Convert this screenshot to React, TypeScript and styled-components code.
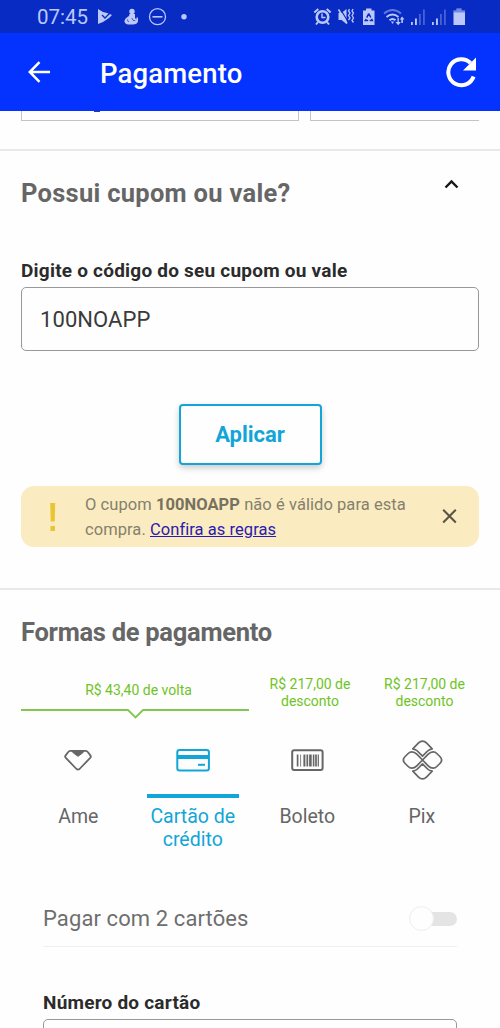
import React from "react";
import styled, { createGlobalStyle } from "styled-components";

const GlobalStyle = createGlobalStyle`
  * { box-sizing: border-box; }
  html, body { margin: 0; padding: 0; background: #fefefe; overflow: hidden; }
  body { font-family: Roboto, "Liberation Sans", sans-serif; }
`;

const BLUE = "#12a5d8";
const GREEN = "#6fc41f";
const GREY = "#666";

const Screen = styled.div`
  width: 500px;
  height: 1028px;
  overflow: hidden;
  display: flex;
  flex-direction: column;
  background: #fefefe;
  white-space: nowrap;
`;

const StatusBar = styled.div`
  flex: none;
  height: 33px;
  display: flex;
  align-items: center;
  padding: 1px 34px 0 37px;
  background: #082bc4;
  color: #bcc8fa;
`;

const Clock = styled.span`
  width: 61px;
  font-size: 20.5px;
`;

const StatusIcons = styled.svg`
  display: block;
  flex: none;
`;

const Spacer = styled.div`
  flex: 1;
`;

const AppBar = styled.header`
  flex: none;
  height: 78px;
  display: flex;
  align-items: center;
  padding: 0 23px 0 28px;
  background: #0433ff;
  color: #fff;
`;

const AppTitle = styled.h1`
  flex: 1;
  margin: 3px 0 0 49px;
  font-size: 27.5px;
  font-weight: 500;
  letter-spacing: 0.15px;
`;

const CutRow = styled.div`
  flex: none;
  height: 38px;
  display: grid;
  grid-template-columns: 278px 1fr;
  gap: 11px;
  align-items: start;
  padding-left: 21px;
  margin-right: 21px;
`;

const CutBox = styled.div<{ $open?: boolean }>`
  height: 10px;
  border: 1px solid #c4c4c4;
  border-top: 0;
  border-right-width: ${(p) => (p.$open ? 0 : 1)}px;
`;

const CutMark = styled.div`
  width: 6px;
  height: 1px;
  margin-left: 72px;
  background: #2a3a9c;
`;

const Divider = styled.div`
  flex: none;
  height: 2px;
  background: #e9e9e9;
`;

const SectionHead = styled.div<{ $h: number; $top: number }>`
  flex: none;
  height: ${(p) => p.$h}px;
  padding: ${(p) => p.$top}px 41px 0 21px;
  display: flex;
  justify-content: space-between;
  align-items: flex-start;
`;

const Heading = styled.h2<{ $ls?: number }>`
  margin: 0;
  font-size: 25.5px;
  line-height: 30px;
  font-weight: 700;
  letter-spacing: ${(p) => p.$ls ?? 0}px;
  color: ${GREY};
`;

const Field = styled.label<{ $inset: number }>`
  flex: none;
  display: flex;
  flex-direction: column;
  margin: 0 ${(p) => p.$inset}px;
  font-size: 19px;
  line-height: 24px;
  font-weight: 700;
  letter-spacing: 0.22px;
  color: #2b2b2b;
`;

const InputBox = styled.div`
  height: 64px;
  margin-top: 4px;
  padding: 1px 18px 0;
  display: flex;
  align-items: center;
  border: 1px solid #999;
  border-radius: 5px;
  font-size: 22px;
  font-weight: 400;
  letter-spacing: 0.08px;
  color: #3a3a3a;
`;

const ApplyButton = styled.button`
  flex: none;
  align-self: center;
  width: 143px;
  height: 61px;
  margin: 53px 0 21px;
  padding: 0;
  border: 2.5px solid ${BLUE};
  border-radius: 4px;
  background: #fefefe;
  box-shadow: 0 3px 6px rgba(0, 0, 0, 0.2);
  font: 700 22px Roboto, sans-serif;
  color: ${BLUE};
`;

const Alert = styled.div`
  flex: none;
  height: 61px;
  margin: 0 21px 41px;
  display: flex;
  align-items: center;
  padding: 0 22px 0 28px;
  border-radius: 13px;
  background: #faecc0;
  color: #85806f;
`;

const AlertText = styled.p`
  flex: 1;
  margin: 1px 0 0 28px;
  font-size: 16.5px;
  line-height: 25px;
  letter-spacing: 0.06px;
`;

const Strong = styled.b`
  color: #77715f;
`;

const RulesLink = styled.a`
  color: #2a1ab0;
  text-decoration: underline;
`;

const Offers = styled.div`
  flex: none;
  height: 65px;
  display: grid;
  grid-template-columns: 228px 115px 114px;
  padding: 0 22px 0 21px;
  font-size: 14px;
  line-height: 17px;
  text-align: center;
  color: ${GREEN};
`;

const Offer = styled.div<{ $top: number }>`
  padding: ${(p) => p.$top}px 0 0 7px;
`;

const Notch = styled.svg`
  display: block;
  margin: 9px 0 0 -7px;
`;

const Methods = styled.div`
  flex: none;
  height: 152px;
  display: grid;
  grid-template-columns: repeat(4, 114.5px);
  padding-left: 21px;
`;

const Method = styled.div<{ $active?: boolean }>`
  display: flex;
  flex-direction: column;
  align-items: center;
  text-align: center;
  font-size: 19.5px;
  line-height: 23px;
  color: ${(p) => (p.$active ? BLUE : GREY)};
`;

const ActiveBar = styled.div<{ $active?: boolean }>`
  width: 92px;
  height: 4px;
  margin: 13px 0 7px;
  background: ${(p) => (p.$active ? BLUE : "transparent")};
`;

const TwoCards = styled.div`
  flex: none;
  height: 56px;
  margin: 0 43px 44px;
  display: flex;
  align-items: center;
  justify-content: space-between;
  border-bottom: 1.5px solid #efefef;
  font-size: 22px;
  letter-spacing: 0.1px;
  color: #6e6e6e;
`;

const Track = styled.div`
  width: 46px;
  height: 14px;
  display: flex;
  align-items: center;
  border-radius: 7px;
  background: #e4e4e4;
`;

const Knob = styled.div`
  width: 25px;
  height: 25px;
  margin-left: -2px;
  border: 1px solid #eee;
  border-radius: 50%;
  background: #fefefe;
`;

const LeftIcons = () => (
  <StatusIcons width="92" height="20" viewBox="98 7 92 20" fill="currentColor">
    <path d="M98 9l5 3 4 1 5 2-3 3-6 4-5 2V9z" />
    <path d="M102 15l3 3 6-6" fill="none" stroke="#082bc4" strokeWidth="1.4" />
    <circle cx="132" cy="11.5" r="2.7" />
    <path d="M129.500 14h5.500v4l1.500 1.500v-2h1.500v4q-1 3-5 3h-5q-4-1-3.500-4 .8-2.500 3-3.500l1.500-1z" />
    <path d="M127.500 19.500q-.5 1.500 1.500 2.300M131.800 18l1.500 2.500h2" fill="none" stroke="#082bc4" strokeWidth=".7" />
    <circle cx="157.500" cy="16.700" r="8" fill="none" stroke="currentColor" strokeWidth="1.300" />
    <path d="M152.500 16h10v1.600h-10z" />
    <circle cx="184" cy="16.700" r="2.700" />
  </StatusIcons>
);

const RightIcons = () => (
  <StatusIcons width="153" height="20" viewBox="313 7 153 20" fill="currentColor">
    <g fill="none" stroke="currentColor">
      <circle cx="322.500" cy="17" r="5.800" strokeWidth="2.600" />
      <path d="M322 13.500v4h3.500" strokeWidth="1.400" />
      <path d="M314.300 12.500l4-3.500M330.700 12.500l-4-3.500M318 22l-2 2.500M327 22l2 2.500" strokeWidth="2" />
    </g>
    <path d="M338.500 13h3l5-4v15l-5-4h-3z" />
    <path d="M340 8.500l8.500 14" stroke="#082bc4" strokeWidth="1.200" />
    <path d="M338.500 9.500l8.500 14" stroke="currentColor" strokeWidth="1.600" />
    <path d="M349.500 9l-1 2 1.500 2-1.500 2.500 1.500 2.500-1.500 2M353 9l-1 2 1.500 2-1.500 2.500 1.500 2.500-1.500 2.500 1.500 2" fill="none" stroke="currentColor" strokeWidth="1.300" />
    <path d="M366 8.500h5.500v2h3V25h-11.500V10.500h3z" />
    <path d="M368.800 13.500l3.500 7h-7z" fill="none" stroke="#082bc4" strokeWidth="1.500" strokeDasharray="4.500 1.500" />
    <g fill="none" stroke="currentColor" strokeWidth="1.800">
      <path d="M384 13.500q8.500-7 17 0" opacity=".5" />
      <path d="M386.500 17q6-5 12 0" />
      <path d="M389.500 20.300q3-2.600 6 0" />
    </g>
    <path d="M391 21.500h3l-1.500 2.500z" />
    <path d="M397.500 18v4h-2l2.700 3.200 2.600-3.200h-2v-4zM401.300 23v-3.500h-1.500l2.300-3 2.300 3h-1.500V23z" />
    {[411, 432].map((x) => (
      <g key={x}>
        <path d={`M${x} 22h1.800v3h-1.800zM${x + 4} 18.500h1.900v6.500h-1.900z`} />
        <path d={`M${x + 8} 14h1.800v11h-1.800zM${x + 12} 9.500h1.800v15.500h-1.800z`} opacity=".35" />
      </g>
    ))}
    <path d="M456.500 8.500h5v2h3.500V25h-11.500V10.500h3z" />
    <path d="M456.500 8.500h5v2h3.500v2h-11.500v-2h3z" fill="#082bc4" opacity=".4" />
  </StatusIcons>
);

const BackArrow = () => (
  <svg width="23" height="22" viewBox="0 0 23 22" fill="none" stroke="#fff" strokeWidth="2.500">
    <path d="M22 11H2M11.500 1.200L1.800 11l9.700 9.800" />
  </svg>
);

const Reload = () => (
  <svg width="31" height="32" viewBox="446 56 31 32">
    <path d="M470.500 63A13 13 0 1 0 473.600 76.500" fill="none" stroke="#fff" strokeWidth="4" />
    <path d="M476 57.500V70.500h-13z" fill="#fff" />
  </svg>
);

const ChevronIcon = styled.svg`
  display: block;
  margin-top: 1.5px;
`;

const Chevron = () => (
  <ChevronIcon width="15" height="11" viewBox="0 0 15 11" fill="none" stroke="#161616" strokeWidth="2.400">
    <path d="M1.500 8.500l6-6 6 6" />
  </ChevronIcon>
);

const Exclamation = () => (
  <svg width="8" height="30" viewBox="0 0 8 30" fill="#e9c531">
    <path d="M1.200 1h5l-.5 18.500H1.700zM1.400 24h4.600v5H1.400z" />
  </svg>
);

const Close = () => (
  <svg width="15" height="15" viewBox="0 0 15 15" stroke="#5b5644" strokeWidth="2.100">
    <path d="M1.200 .8l12.600 12.600M13.800 .8L1.200 13.400" />
  </svg>
);

const iconBox = { width: 42, height: 42, viewBox: "0 0 42 42", fill: "none", stroke: "currentColor" };

const AmeIcon = () => (
  <svg {...iconBox} strokeWidth="1.800" strokeLinejoin="round">
    <path d="M13.200 11.800h15.600q1.200 0 2 1.200l2.700 3.600q.8 1.200-.3 2.300L22.500 30q-1.500 1.200-3 0L8.800 18.900q-1.100-1.100-.3-2.300l2.700-3.600q.8-1.200 2-1.200z" />
    <path d="M15 12h12l-.8 1.300q-.5 1-1.400 1.300l-3.800 2.700-3.800-2.700q-.9-.3-1.400-1.300z" fill="currentColor" strokeWidth="1" />
  </svg>
);

const CardIcon = () => (
  <svg {...iconBox} strokeWidth="2">
    <rect x="5.300" y="11" width="31.600" height="20.500" rx="2.300" />
    <path d="M5 18h32" strokeWidth="4" />
    <path d="M26 25.800h7" strokeWidth="2" />
  </svg>
);

const BoletoIcon = () => (
  <svg {...iconBox} strokeWidth="2">
    <rect x="6.200" y="11.200" width="30.400" height="19.800" rx="2" />
    <path d="M11.600 15.500v12" strokeWidth="1.700" />
    <path d="M14.600 15.500v12" strokeWidth=".8" />
    <path d="M18.400 15.500v12" strokeWidth="2" />
    <path d="M21.300 15.500v12" strokeWidth="1.700" />
    <path d="M24.400 15.500v12" strokeWidth="2.600" />
    <path d="M27.600 15.500v12" strokeWidth="1.600" />
    <path d="M30 15.500v12" strokeWidth="1.700" />
    <path d="M32.300 15.500v12" strokeWidth="1.200" />
  </svg>
);

const PixIcon = () => (
  <svg {...iconBox} strokeWidth="1.700" strokeLinejoin="round">
    <path d="M11.800 9.800l5.500-5.600q4.200-4.200 8.400 0l5.500 5.600q-3 .5-4.600 2.200l-5.100 5.200-5.100-5.200q-1.600-1.700-4.600-2.200z" />
    <path d="M11.800 32.200l5.500 5.600q4.200 4.200 8.400 0l5.500-5.600q-3-.5-4.600-2.200l-5.100-5.200-5.100 5.200q-1.600 1.700-4.600 2.200z" />
    <path d="M21.500 21l-5.700-5.800q-2.300-2.300-5-2.300-2 0-3.600 1.600l-3.100 3q-3.500 3.500 0 7l3.100 3q1.600 1.600 3.600 1.600 2.700 0 5-2.300zl5.700-5.800q2.300-2.300 5-2.300 2 0 3.600 1.600l3.100 3q3.500 3.500 0 7l-3.100 3q-1.600 1.600-3.600 1.600-2.700 0-5-2.300z" />
  </svg>
);

const methods = [
  { label: ["Ame"], Icon: AmeIcon },
  { label: ["Cartão de", "crédito"], Icon: CardIcon, active: true },
  { label: ["Boleto"], Icon: BoletoIcon },
  { label: ["Pix"], Icon: PixIcon },
];

export default function App() {
  return (
    <Screen>
      <GlobalStyle />
      <StatusBar>
        <Clock>07:45</Clock>
        <LeftIcons />
        <Spacer />
        <RightIcons />
      </StatusBar>
      <AppBar>
        <BackArrow />
        <AppTitle>Pagamento</AppTitle>
        <Reload />
      </AppBar>
      <CutRow>
        <CutBox>
          <CutMark />
        </CutBox>
        <CutBox $open />
      </CutRow>
      <Divider />
      <SectionHead $h={108} $top={26.5}>
        <Heading $ls={0.28}>Possui cupom ou vale?</Heading>
        <Chevron />
      </SectionHead>
      <Field $inset={21}>
        Digite o código do seu cupom ou vale
        <InputBox>100NOAPP</InputBox>
      </Field>
      <ApplyButton>Aplicar</ApplyButton>
      <Alert>
        <Exclamation />
        <AlertText>
          O cupom <Strong>100NOAPP</Strong> não é válido para esta
          <br />
          compra. <RulesLink>Confira as regras</RulesLink>
        </AlertText>
        <Close />
      </Alert>
      <Divider />
      <SectionHead $h={84} $top={27}>
        <Heading $ls={-0.28}>Formas de pagamento</Heading>
      </SectionHead>
      <Offers>
        <Offer $top={8}>
          R$ 43,40 de volta
          <Notch width="228" height="12" viewBox="0 0 228 12" fill="none" stroke="#83c750" strokeWidth="1.800">
            <path d="M0 2h107l7.500 7.500L122 2h106" />
          </Notch>
        </Offer>
        <Offer $top={2}>
          R$ 217,00 de
          <br />
          desconto
        </Offer>
        <Offer $top={2}>
          R$ 217,00 de
          <br />
          desconto
        </Offer>
      </Offers>
      <Methods>
        {methods.map(({ label, Icon, active }) => (
          <Method key={label[0]} $active={active}>
            <Icon />
            <ActiveBar $active={active} />
            {label.map((line) => (
              <span key={line}>{line}</span>
            ))}
          </Method>
        ))}
      </Methods>
      <TwoCards>
        Pagar com 2 cartões
        <Track>
          <Knob />
        </Track>
      </TwoCards>
      <Field $inset={43}>
        Número do cartão
        <InputBox />
      </Field>
    </Screen>
  );
}
